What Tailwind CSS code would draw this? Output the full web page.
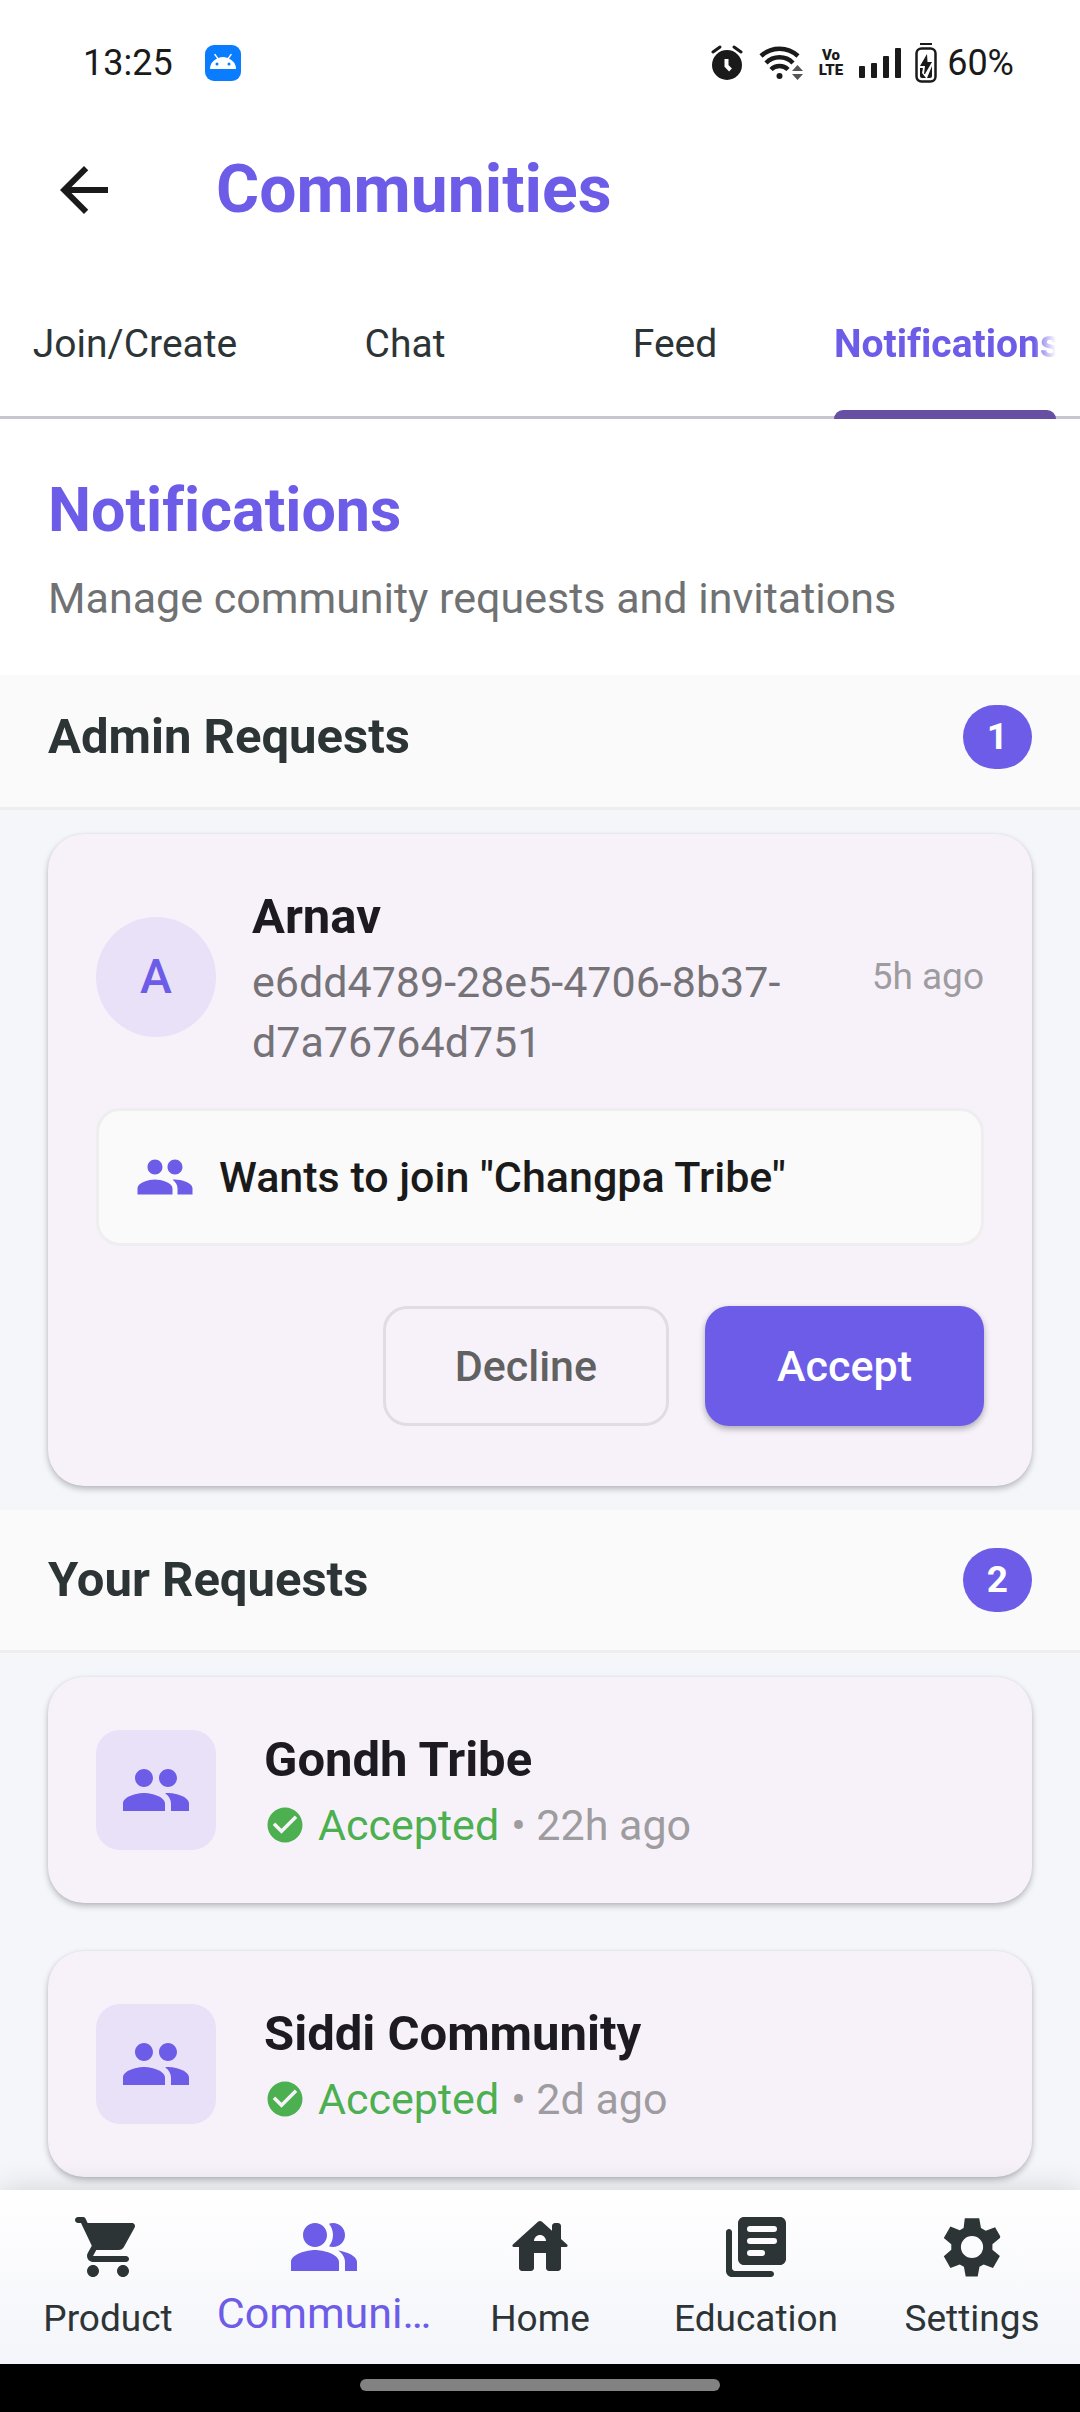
<!DOCTYPE html>
<html lang="en">
<head>
<meta charset="utf-8">
<meta name="viewport" content="width=device-width, initial-scale=1">
<title>Communities</title>
<script src="https://cdn.jsdelivr.net/npm/@tailwindcss/browser@4"></script>
</head>
<body class="flex h-screen flex-col overflow-hidden bg-white font-[Roboto,sans-serif] text-[#1d1b20] [font-variant-ligatures:no-common-ligatures]">

<svg class="hidden" aria-hidden="true">
  <symbol id="people" viewBox="0 0 24 24"><path fill="currentColor" d="M16 11c1.66 0 2.99-1.34 2.99-3S17.66 5 16 5c-1.66 0-3 1.34-3 3s1.34 3 3 3zm-8 0c1.66 0 2.99-1.34 2.99-3S9.66 5 8 5C6.34 5 5 6.34 5 8s1.34 3 3 3zm0 2c-2.33 0-7 1.17-7 3.5V19h14v-2.5c0-2.33-4.67-3.5-7-3.5zm8 0c-.29 0-.62.02-.97.05 1.16.84 1.97 1.97 1.97 3.45V19h6v-2.5c0-2.33-4.67-3.5-7-3.5z"/></symbol>
  <symbol id="check" viewBox="0 0 24 24"><path fill="currentColor" d="M12 2C6.48 2 2 6.48 2 12s4.48 10 10 10 10-4.48 10-10S17.52 2 12 2zm-2 15l-5-5 1.41-1.41L10 14.17l7.59-7.59L19 8l-9 9z"/></symbol>
</svg>

<!-- Status bar -->
<div class="flex h-[125px] shrink-0 items-center justify-between pr-[66px] pl-[83px] text-[36px] leading-[48px] text-[#1a1a1a]">
  <div class="flex items-center gap-8">
    <span>13:25</span>
    <svg class="size-9" viewBox="0 0 36 36"><rect width="36" height="36" rx="9" fill="#0a7cff"/><path fill="#fff" d="M5 24a13 12 0 0 1 7-10.500l-3-4 1.200-.8 3.200 4.200a14 14 0 0 1 9.200 0l3.200-4.200 1.200.8-3 4A13 12 0 0 1 31 24z"/><circle cx="12" cy="19" r="1.500" fill="#0a7cff"/><circle cx="24" cy="19" r="1.500" fill="#0a7cff"/></svg>
  </div>
  <div class="flex items-center">
    <svg class="mr-4 h-9 w-8" viewBox="0 0 32 36"><circle cx="16" cy="20" r="15" fill="#1a1a1a"/><path d="M2 7l7-5M30 7l-7-5" stroke="#1a1a1a" stroke-width="3" stroke-linecap="round"/><path d="M15.500 14v7l4 4" fill="none" stroke="#fff" stroke-width="4"/></svg>
    <svg class="mr-4 h-9 w-11" viewBox="0 0 44 36" fill="none" stroke="#1a1a1a" stroke-width="4.500"><path d="M2 11a27 27 0 0 1 37 0M7 18a19 19 0 0 1 27 0M12 24.500a12 12 0 0 1 17 0"/><circle cx="20.500" cy="31" r="3" fill="#1a1a1a" stroke="none"/><path d="M33 26l5.500-6 5.500 6zM33 29l5.500 6 5.500-6z" fill="#555" stroke="none"/></svg>
    <span class="mr-4 flex flex-col items-center text-[15px] leading-[15px] font-black"><span>Vo</span><span>LTE</span></span>
    <svg class="mr-3 h-9 w-11" viewBox="0 0 44 36" fill="#1a1a1a"><rect x="0" y="21" width="6" height="12" rx="1"/><rect x="12" y="18" width="6" height="15" rx="1"/><rect x="24" y="11" width="6" height="22" rx="1"/><rect x="36" y="3" width="6" height="30" rx="1"/></svg>
    <svg class="mr-2.5 h-10 w-[22px]" viewBox="0 0 22 40"><rect x="5" y="0" width="12" height="2" fill="#1a1a1a"/><rect x="1.500" y="5.500" width="19" height="33" rx="5" fill="none" stroke="#1a1a1a" stroke-width="2.500"/><path fill="#1a1a1a" d="M12 11L5 23h5l-1 8h1l7-12h-4.500zM5 25h3l-1 5 4 5H7a2 2 0 0 1-2-2zM17 23v10a2 2 0 0 1-2 2h-3z"/></svg>
    <span>60%</span>
  </div>
</div>

<!-- App bar -->
<header class="flex h-[130px] shrink-0 items-center gap-24 px-12">
  <button type="button" aria-label="Back"><svg class="size-[72px]" viewBox="0 0 24 24"><path fill="#1a1a1a" d="M20 11H7.830l5.590-5.590L12 4l-8 8 8 8 1.410-1.410L7.830 13H20v-2z"/></svg></button>
  <h1 class="text-[66px] leading-[84px] font-bold text-[#6c5ce7]">Communities</h1>
</header>

<!-- Tabs -->
<nav class="grid h-[164px] shrink-0 grid-cols-4 border-b-[3px] border-[#c9c5d0] text-center text-[39px] leading-[48px] text-[#2d3436]">
  <a href="#" class="flex items-center justify-center pt-4">Join/Create</a>
  <a href="#" class="flex items-center justify-center pt-4">Chat</a>
  <a href="#" class="flex items-center justify-center pt-4">Feed</a>
  <a href="#" aria-current="page" class="relative mx-6 flex items-center pt-4 font-bold text-[#6c5ce7]">
    <span class="w-full overflow-hidden mask-r-from-90% mask-r-to-100% text-left whitespace-nowrap">Notifications</span>
    <span class="absolute inset-x-0 -bottom-[3px] h-[9px] rounded-t-[9px] bg-[#6750a4]"></span>
  </a>
</nav>

<!-- Scrolling content -->
<main class="min-h-0 flex-1 overflow-hidden bg-[#f5f6fa]">
  <div class="bg-white px-12 pt-[53px] pb-[47px]">
    <h2 class="text-[61px] leading-[76px] font-bold text-[#6c5ce7]">Notifications</h2>
    <p class="mt-5 text-[43px] leading-[60px] text-[#6f7173]">Manage community requests and invitations</p>
  </div>

  <section>
    <div class="flex items-center justify-between border-b-[3px] border-[#eeeeee] bg-[#fafafa] px-12 pt-[27px] pb-[35px]">
      <h3 class="text-[49px] leading-[70px] font-bold text-[#2d3436]">Admin Requests</h3>
      <span class="rounded-full bg-[#6c5ce7] px-6 text-[37px] leading-[64px] font-bold text-white">1</span>
    </div>
    <article class="mx-12 my-6 rounded-[36px] bg-[#f7f2fa] px-12 pt-12 pb-[60px] shadow-[0_3px_6px_rgba(0,0,0,0.25),0_0_3px_rgba(0,0,0,0.05)]">
      <div class="flex items-center gap-9">
        <div class="flex size-[120px] shrink-0 items-center justify-center rounded-full bg-[#e9e1f8] text-[48px] font-medium text-[#6c5ce7]">A</div>
        <div class="min-w-0 flex-1">
          <h4 class="text-[49px] leading-[70px] font-bold">Arnav</h4>
          <p class="text-[43px] leading-[60px] text-[#757378]">e6dd4789-28e5-4706-8b37-<wbr>d7a76764d751</p>
        </div>
        <time class="text-[37px] leading-[48px] text-[#9e9c9f]">5h ago</time>
      </div>
      <div class="mt-9 flex items-center gap-6 rounded-3xl border-[3px] border-[#eeeeee] bg-[#fafafa] p-9">
        <svg class="size-[60px] text-[#6c5ce7]"><use href="#people"/></svg>
        <p class="text-[43px] leading-[60px] font-medium text-[#1a1a1a]">Wants to join "Changpa Tribe"</p>
      </div>
      <div class="mt-[60px] flex justify-end gap-9 text-[43px] leading-[60px] font-medium">
        <button type="button" class="h-[120px] rounded-3xl border-[3px] border-[#e0dce3] px-[69px] text-[#616161]">Decline</button>
        <button type="button" class="h-[120px] rounded-3xl bg-[#6c5ce7] px-[72px] text-white shadow-[0_3px_6px_rgba(0,0,0,0.3)]">Accept</button>
      </div>
    </article>
  </section>

  <section>
    <div class="flex items-center justify-between border-b-[3px] border-[#eeeeee] bg-[#fafafa] px-12 py-[35px]">
      <h3 class="text-[49px] leading-[70px] font-bold text-[#2d3436]">Your Requests</h3>
      <span class="rounded-full bg-[#6c5ce7] px-6 text-[37px] leading-[64px] font-bold text-white">2</span>
    </div>
    <div class="flex flex-col gap-12 px-12 py-6">
      <article class="flex items-center gap-12 rounded-[36px] bg-[#f7f2fa] p-12 shadow-[0_3px_6px_rgba(0,0,0,0.25),0_0_3px_rgba(0,0,0,0.05)]">
        <div class="flex size-[120px] shrink-0 items-center justify-center rounded-3xl bg-[#e9e1f8] text-[#6c5ce7]"><svg class="size-[72px]"><use href="#people"/></svg></div>
        <div>
          <h4 class="text-[49px] leading-[70px] font-bold">Gondh Tribe</h4>
          <p class="flex items-center gap-3 text-[43px] leading-[60px] text-[#4caf50]"><svg class="size-[42px]"><use href="#check"/></svg>Accepted <span class="text-[#9e9c9f]">• 22h ago</span></p>
        </div>
      </article>
      <article class="flex items-center gap-12 rounded-[36px] bg-[#f7f2fa] p-12 shadow-[0_3px_6px_rgba(0,0,0,0.25),0_0_3px_rgba(0,0,0,0.05)]">
        <div class="flex size-[120px] shrink-0 items-center justify-center rounded-3xl bg-[#e9e1f8] text-[#6c5ce7]"><svg class="size-[72px]"><use href="#people"/></svg></div>
        <div>
          <h4 class="text-[49px] leading-[70px] font-bold">Siddi Community</h4>
          <p class="flex items-center gap-3 text-[43px] leading-[60px] text-[#4caf50]"><svg class="size-[42px]"><use href="#check"/></svg>Accepted <span class="text-[#9e9c9f]">• 2d ago</span></p>
        </div>
      </article>
    </div>
  </section>
</main>

<!-- Bottom navigation -->
<nav class="relative grid h-[174px] shrink-0 grid-cols-5 bg-linear-to-b from-white to-[#f4f5fa] text-[37px] leading-[48px] text-[#2d3436] shadow-[0_0_30px_rgba(0,0,0,0.15)]">
  <a href="#" class="flex flex-col items-center gap-3 pt-[21px]">
    <svg class="size-[72px]" viewBox="0 0 24 24" fill="currentColor"><path d="M7 18c-1.100 0-1.990.9-1.990 2S5.900 22 7 22s2-.9 2-2-.9-2-2-2zM1 3c0 .55.45 1 1 1h1l3.600 7.590-1.350 2.440C4.520 15.370 5.480 17 7 17h11c.55 0 1-.45 1-1s-.45-1-1-1H7l1.100-2h7.450c.75 0 1.410-.41 1.750-1.030l3.580-6.490C21.250 4.820 20.760 4 20.010 4H5.210l-.67-1.430c-.16-.35-.52-.57-.9-.57H2c-.55 0-1 .45-1 1zm16 15c-1.100 0-1.990.9-1.990 2s.89 2 1.990 2 2-.9 2-2-.9-2-2-2z"/></svg>
    <span>Product</span>
  </a>
  <a href="#" aria-current="page" class="flex flex-col items-center pt-[21px] text-[43px] leading-[60px] text-[#6c5ce7]">
    <svg class="size-[72px]" viewBox="0 0 24 24" fill="currentColor"><path d="M16.670 13.130C18.040 14.060 19 15.320 19 17v3h4v-3c0-2.180-3.570-3.470-6.330-3.870zM15 12c2.210 0 4-1.790 4-4s-1.790-4-4-4c-.47 0-.91.1-1.330.24C14.500 5.270 15 6.580 15 8s-.5 2.730-1.330 3.760c.42.14.86.24 1.330.24zM9 12c2.210 0 4-1.790 4-4s-1.790-4-4-4-4 1.790-4 4 1.790 4 4 4zm0 1c-2.670 0-8 1.340-8 4v3h16v-3c0-2.660-5.330-4-8-4z"/></svg>
    <span>Communi…</span>
  </a>
  <a href="#" class="flex flex-col items-center gap-3 pt-[21px]">
    <svg class="size-[72px]" viewBox="0 0 24 24" fill="currentColor"><path d="M19 9.300V5c0-.55-.45-1-1-1h-1c-.55 0-1 .45-1 1v1.600l-3.330-3a1 1 0 0 0-1.340 0l-8.360 7.530c-.34.31-.13.87.33.87H5v7c0 .55.45 1 1 1h3c.55 0 1-.45 1-1v-5h4v5c0 .55.45 1 1 1h3c.55 0 1-.45 1-1v-7h1.700c.46 0 .67-.57.33-.87L19 9.300zm-9 .7c0-1.100.9-2 2-2s2 .9 2 2h-4z"/></svg>
    <span>Home</span>
  </a>
  <a href="#" class="flex flex-col items-center gap-3 pt-[21px]">
    <svg class="size-[72px]" viewBox="0 0 24 24" fill="currentColor"><path fill-rule="evenodd" d="M3 6c-.55 0-1 .45-1 1v13c0 1.100.9 2 2 2h13c.55 0 1-.45 1-1s-.45-1-1-1H5c-.55 0-1-.45-1-1V7c0-.55-.45-1-1-1zm17-4H8c-1.100 0-2 .9-2 2v12c0 1.100.9 2 2 2h12c1.100 0 2-.9 2-2V4c0-1.100-.9-2-2-2zM10 9h8a1 1 0 0 1 0 2h-8a1 1 0 0 1 0-2zm0 4h4a1 1 0 0 1 0 2h-4a1 1 0 0 1 0-2zm0-8h8a1 1 0 0 1 0 2h-8a1 1 0 0 1 0-2z"/></svg>
    <span>Education</span>
  </a>
  <a href="#" class="flex flex-col items-center gap-3 pt-[21px]">
    <svg class="size-[72px]" viewBox="0 0 24 24" fill="currentColor"><path fill-rule="evenodd" d="M9.600 2.400h4.800l.6 3.300 1.600.9 3.100-1.200 1.700 3 -0 .2L21.300 9l-2.500 2.100v1.800L21.300 15l-2.300 4-3.100-1.200-1.400.8-.6 3.200H9.900l-.6-3.200-1.400-.8L4.800 19l-2.200-3.900 2.500-2.200v-1.800L2.600 9l2.200-3.800 3.100 1.200 1.300-.7zM12 8.300a3.700 3.700 0 1 0 0 7.400 3.700 3.700 0 0 0 0-7.400z"/></svg>
    <span>Settings</span>
  </a>
</nav>

<!-- Gesture bar -->
<div class="relative flex h-12 shrink-0 justify-center bg-black pt-[15px]">
  <div class="h-3 w-1/3 rounded-full bg-[#828282]"></div>
</div>
</body>
</html>
